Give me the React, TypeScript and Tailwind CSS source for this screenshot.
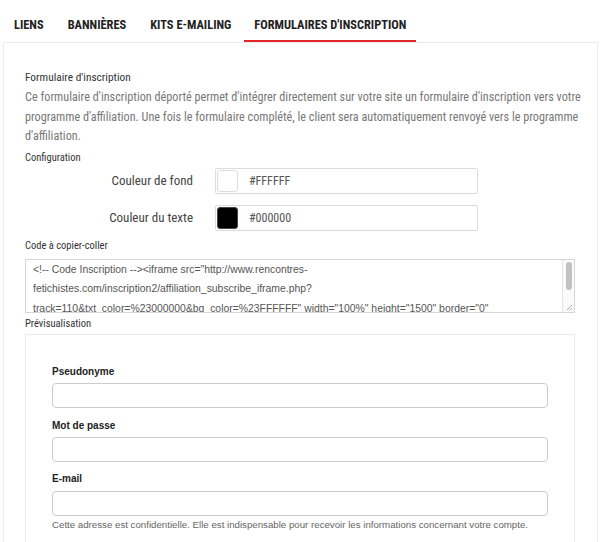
import React from "react";

const rob = "font-['Roboto',sans-serif] [font-stretch:75%]";

export default function App() {
  const fields = [
    { l: "Pseudonyme", lm: "", im: "mt-[4px]" },
    { l: "Mot de passe", lm: "mt-[11px]", im: "mt-[4px]" },
    { l: "E-mail", lm: "mt-[10px]", im: "mt-[5px]" },
  ];
  return (
    <div className="w-[600px] h-[542px] overflow-hidden bg-white">
      {/* Tabs */}
      <div className={`flex h-[42px] pl-[3px] gap-[2px] ${rob} font-bold text-[12.4px] text-[#222] uppercase`}>
        <div className="px-[11px] pt-[16px]">Liens</div>
        <div className="px-[11px] pt-[16px]">Bannières</div>
        <div className="px-[11px] pt-[16px]">Kits e-mailing</div>
        <div className="px-[10px] pt-[16px] border-b-2 border-[#e2262c]">Formulaires d'inscription</div>
      </div>
      {/* Panel */}
      <div className="ml-[3px] w-[595px] border border-[#ececec] h-[520px] pl-[21px] pr-[21px] pt-[26px]">
        <div className={`${rob} text-[11.4px] text-[#333] leading-[16px]`}>Formulaire d'inscription</div>
        <div className={`${rob} text-[12.2px] text-[#777] leading-[19.5px] mt-[3px] whitespace-nowrap`}>
          <div>Ce formulaire d'inscription déporté permet d'intégrer directement sur votre site un formulaire d'inscription vers votre</div>
          <div>programme d'affiliation. Une fois le formulaire complété, le client sera automatiquement renvoyé vers le programme</div>
          <div>d'affiliation.</div>
        </div>
        <div className={`${rob} text-[10.5px] text-[#333] mt-[4px] leading-[14px]`}>Configuration</div>
        <div className="flex flex-col gap-[11px] mt-[3px]">
          {[
            { label: "Couleur de fond", color: "#FFFFFF", sw: "bg-white border border-[#ddd]" },
            { label: "Couleur du texte", color: "#000000", sw: "bg-black border border-[#444]" },
          ].map((r) => (
            <div key={r.label} className="flex items-center">
              <div className={`w-[168px] text-right ${rob} text-[13px] text-[#444]`}>{r.label}</div>
              <div className="ml-[22px] w-[263px] h-[26px] border border-[#dcdcdc] rounded-[2px] flex items-center pl-[1px]">
                <div className={`w-[21px] h-[22px] rounded-[3px] ${r.sw}`}></div>
                <div className={`ml-[11px] ${rob} text-[12px] text-[#555]`}>{r.color}</div>
              </div>
            </div>
          ))}
        </div>
        <div className={`${rob} text-[10.5px] text-[#333] mt-[8px] leading-[14px]`}>Code à copier-coller</div>
        <div className="relative mt-[6px] w-[550px] h-[54px] border border-[#d6d6d6] overflow-hidden font-['Liberation_Sans',Arial,sans-serif] text-[10.4px] text-[#555] leading-[19.5px] pl-[7px]">
          <div className="whitespace-nowrap">{'<!-- Code Inscription --><iframe src="http://www.rencontres-'}</div>
          <div className="whitespace-nowrap">fetichistes.com/inscription2/affiliation_subscribe_iframe.php?</div>
          <div className="whitespace-nowrap">{'track=110&txt_color=%23000000&bg_color=%23FFFFFF" width="100%" height="1500" border="0"'}</div>
          <div className="whitespace-nowrap">{'frameborder="0" style="background-color:#FFFFFF;" scrolling="auto"></iframe><!-- Fin code Inscription -->'}</div>
          <div className="absolute right-0 top-0 bottom-0 w-[12px] bg-[#fafafa] border-l border-[#e6e6e6]">
            <div className="mx-auto mt-[2px] w-[6px] h-[28px] rounded-full bg-[#c1c1c1]"></div>
            <svg className="absolute right-[1px] bottom-[1px]" width="8" height="8" viewBox="0 0 8 8">
              <path d="M7 2 L2 7 M7 5 L5 7" stroke="#999" strokeWidth="0.8" />
            </svg>
          </div>
        </div>
        <div className={`${rob} text-[10.5px] text-[#333] mt-[4px] leading-[14px]`}>Prévisualisation</div>
        <div className="mt-[3px] w-[550px] h-[300px] border border-[#ececec] pl-[26px] pr-[26px] pt-[30px] font-['Liberation_Sans',Arial,sans-serif]">
          {fields.map((f) => (
            <div key={f.l} className={f.lm}>
              <div className="text-[10px] font-bold text-[#222] leading-[14px]">{f.l}</div>
              <div className={`${f.im} h-[25px] w-[496px] border border-[#ccc] rounded-[4px]`}></div>
            </div>
          ))}
          <div className="mt-[2px] text-[9.7px] text-[#666] leading-[14px] whitespace-nowrap">
            Cette adresse est confidentielle. Elle est indispensable pour recevoir les informations concernant votre compte.
          </div>
        </div>
      </div>
    </div>
  );
}
